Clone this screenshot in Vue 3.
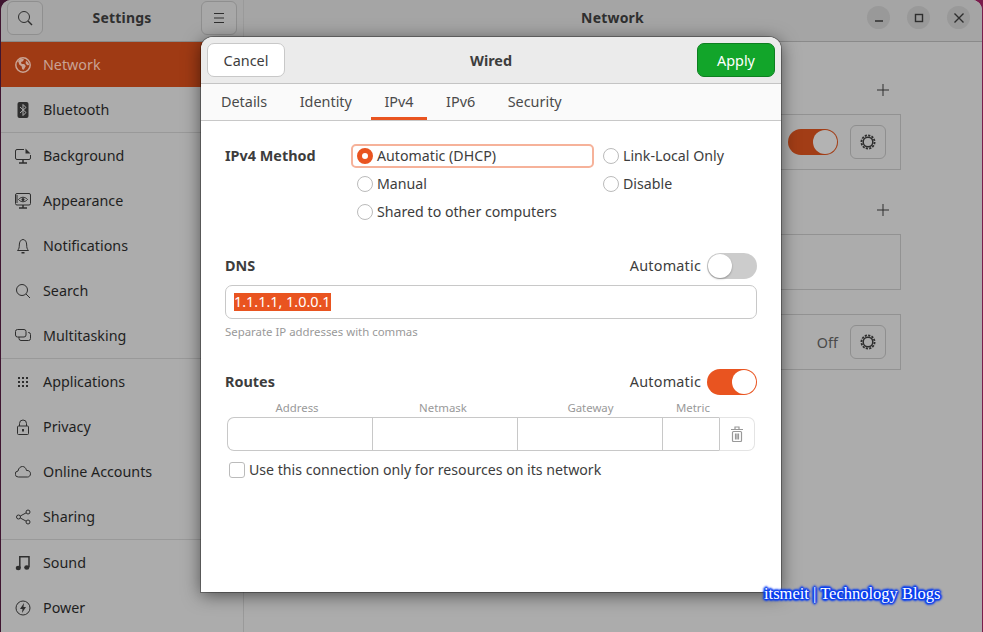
<script setup>
const groups = [
  [
    { name: 'Network', icon: 'globe', active: true },
    { name: 'Bluetooth', icon: 'bluetooth' },
  ],
  [
    { name: 'Background', icon: 'background' },
    { name: 'Appearance', icon: 'appearance' },
    { name: 'Notifications', icon: 'bell' },
    { name: 'Search', icon: 'search' },
    { name: 'Multitasking', icon: 'multitask' },
  ],
  [
    { name: 'Applications', icon: 'apps' },
    { name: 'Privacy', icon: 'lock' },
    { name: 'Online Accounts', icon: 'cloud' },
    { name: 'Sharing', icon: 'share' },
  ],
  [
    { name: 'Sound', icon: 'music' },
    { name: 'Power', icon: 'power' },
  ],
]

const tabs = ['Details', 'Identity', 'IPv4', 'IPv6', 'Security']
const routeCols = ['Address', 'Netmask', 'Gateway', 'Metric']
const appDots = [[3, 3], [7, 3], [11, 3], [3, 7], [7, 7], [11, 7], [3, 11], [7, 11], [11, 11]]
</script>

<template>
  <div class="desktop">
    <div class="window">
      <aside class="sidebar">
        <div class="side-head">
          <button class="head-btn">
            <svg viewBox="0 0 16 16" width="16" height="16"><circle cx="7" cy="7" r="5.5" class="st"/><path d="M11 11l4 4" class="st2"/></svg>
          </button>
          <span class="head-title">Settings</span>
          <button class="head-btn">
            <svg viewBox="0 0 16 16" width="16" height="16"><path d="M3 3.5h10M3 8h10M3 12.500h10" class="st"/></svg>
          </button>
        </div>
        <nav>
          <div v-for="(group, i) in groups" :key="i" class="nav-group">
            <div v-for="item in group" :key="item.name" class="nav-row" :class="{ active: item.active }">
              <svg viewBox="0 0 16 16" width="16" height="16" class="nav-icon">
                <template v-if="item.icon === 'globe'">
                  <circle cx="8" cy="8" r="7.2" class="st"/>
                  <path d="M3 4l3-2.500 3 .8-1 2-2 .6.6 2 2.600.2 1.600 2-2 3.600-1.600-.4-.6-3-2.200-1.600zM11 3.500l2.400 2.200.8 2.400-2 .2-1.600-2z" class="fl"/>
                </template>
                <template v-else-if="item.icon === 'bluetooth'">
                  <rect x="2.500" y="0" width="11" height="16" rx="2" class="fl"/>
                  <path d="M5 5l6 5.500-3 3V2.500l3 3L5 11" class="cut-st"/>
                </template>
                <template v-else-if="item.icon === 'background'">
                  <path d="M9 1.500H2A1.500 1.500 0 0 0 .5 3v7A1.500 1.500 0 0 0 2 11.500h12a1.500 1.500 0 0 0 1.500-1.500V7" class="st"/>
                  <path d="M10.500 .5l5 5h-5z" class="fl"/>
                  <path d="M8 12v2.500M4 15h8" class="st2"/>
                </template>
                <template v-else-if="item.icon === 'appearance'">
                  <rect x=".5" y=".5" width="15" height="11.500" rx="1.500" class="st"/>
                  <path d="M3.500 6.500c2.500-3 6.500-3 9 0-2.500 3-6.500 3-9 0z" class="st"/>
                  <circle cx="8" cy="6.500" r="1.500" class="fl"/>
                  <path d="M2 2.500v8" class="dash"/>
                  <path d="M8 12v2.500M4 15h8" class="st2"/>
                </template>
                <template v-else-if="item.icon === 'bell'">
                  <path d="M2.500 12.500h11c-1.500-1.500-1.800-3-1.800-5.500C11.700 4 10.300 1.500 8 1.500S4.300 4 4.300 7c0 2.500-.3 4-1.800 5.500z" class="st"/>
                  <path d="M6.500 14.800h3" class="st2"/>
                </template>
                <template v-else-if="item.icon === 'search'">
                  <circle cx="7" cy="7" r="5.500" class="st"/><path d="M11 11l4 4" class="st"/>
                </template>
                <template v-else-if="item.icon === 'multitask'">
                  <rect x=".5" y="1.500" width="10.500" height="7.500" rx="2" class="st"/>
                  <path d="M13 4.500h.5a2 2 0 0 1 2 2v4a2 2 0 0 1-2 2H6a2 2 0 0 1-2-2V9" class="st"/>
                </template>
                <template v-else-if="item.icon === 'apps'">
                  <rect v-for="p in appDots" :key="p.join()" :x="p[0]" :y="p[1]" width="2" height="2" class="fl"/>
                </template>
                <template v-else-if="item.icon === 'lock'">
                  <rect x="2.500" y="7" width="11" height="8.500" rx="1" class="st"/>
                  <path d="M4.500 7V4.500a3.500 3.500 0 0 1 7 0V7" class="st"/>
                  <rect x="7" y="10" width="2" height="2.500" class="fl"/>
                </template>
                <template v-else-if="item.icon === 'cloud'">
                  <path d="M3.500 13a3 3 0 0 1-.5-6c.5-3 2.500-4.500 4.500-4.500S11 4 11.500 6.500c2.500-.3 4 1.300 4 3.300S14 13 12.500 13z" class="st"/>
                </template>
                <template v-else-if="item.icon === 'share'">
                  <circle cx="13" cy="3" r="2" class="st"/><circle cx="13" cy="13" r="2" class="st"/><circle cx="3.500" cy="8" r="2" class="st"/>
                  <path d="M5.300 7l5.900-3.200M5.300 9l5.900 3.200" class="st"/>
                </template>
                <template v-else-if="item.icon === 'music'">
                  <path d="M4.800 13V1.800h9.200V12" class="st2"/>
                  <ellipse cx="3.300" cy="13" rx="2.600" ry="2.200" class="fl"/>
                  <ellipse cx="11.800" cy="12.500" rx="2.600" ry="2.200" class="fl"/>
                </template>
                <template v-else>
                  <circle cx="8" cy="8" r="7" class="st"/>
                  <path d="M9 3L5 9h2.500L7 13l4-6H8.500z" class="fl"/>
                </template>
              </svg>
              <span>{{ item.name }}</span>
            </div>
          </div>
        </nav>
      </aside>

      <main class="main">
        <div class="main-head">
          <span class="head-title">Network</span>
          <div class="win-btns">
            <span class="win-btn"><svg viewBox="0 0 16 16" width="16" height="16"><path d="M4 11h8" class="win-ic"/></svg></span>
            <span class="win-btn"><svg viewBox="0 0 16 16" width="16" height="16"><rect x="4.500" y="4.500" width="7" height="7" class="win-ic"/></svg></span>
            <span class="win-btn"><svg viewBox="0 0 16 16" width="16" height="16"><path d="M3.500 3.500l9 9M12.500 3.500l-9 9" class="win-ic"/></svg></span>
          </div>
        </div>
        <div class="main-body">
          <div class="sec-plus">
            <svg viewBox="0 0 12 12" width="12" height="12"><path d="M6 0v12M0 6h12" class="st"/></svg>
          </div>
          <div class="card">
            <span class="bg-toggle"><i></i></span>
            <button class="gear-btn">
              <svg viewBox="0 0 16 16" width="16" height="16"><circle cx="8" cy="8" r="6.600" class="gear-teeth"/><circle cx="8" cy="8" r="4.800" class="st2"/></svg>
            </button>
          </div>
          <div class="sec-plus second">
            <svg viewBox="0 0 12 12" width="12" height="12"><path d="M6 0v12M0 6h12" class="st"/></svg>
          </div>
          <div class="card"></div>
          <div class="card third">
            <span class="off">Off</span>
            <button class="gear-btn">
              <svg viewBox="0 0 16 16" width="16" height="16"><circle cx="8" cy="8" r="6.600" class="gear-teeth"/><circle cx="8" cy="8" r="4.800" class="st2"/></svg>
            </button>
          </div>
        </div>
      </main>
    </div>

    <div class="dialog">
      <header class="dlg-head">
        <button class="btn">Cancel</button>
        <span class="dlg-title">Wired</span>
        <button class="btn apply">Apply</button>
      </header>
      <div class="tabs">
        <span v-for="t in tabs" :key="t" class="tab" :class="{ on: t === 'IPv4' }">{{ t }}</span>
      </div>
      <div class="dlg-body">
        <div class="method">
          <span class="bold method-label">IPv4 Method</span>
          <div class="radio-grid">
            <div class="radio focus"><i class="dot checked"></i>Automatic (DHCP)</div>
            <div class="radio"><i class="dot"></i>Link-Local Only</div>
            <div class="radio"><i class="dot"></i>Manual</div>
            <div class="radio"><i class="dot"></i>Disable</div>
            <div class="radio"><i class="dot"></i>Shared to other computers</div>
          </div>
        </div>

        <div class="sec-row">
          <span class="bold">DNS</span>
          <div class="auto">Automatic<span class="switch"><i></i></span></div>
        </div>
        <div class="entry"><span class="selected">1.1.1.1, 1.0.0.1</span></div>
        <div class="hint">Separate IP addresses with commas</div>

        <div class="sec-row routes">
          <span class="bold">Routes</span>
          <div class="auto">Automatic<span class="switch on"><i></i></span></div>
        </div>
        <div class="route-labels">
          <span v-for="c in routeCols" :key="c">{{ c }}</span>
        </div>
        <div class="route-row">
          <div v-for="c in routeCols" :key="c" class="route-cell"></div>
          <div class="route-del">
            <svg viewBox="0 0 16 16" width="16" height="16"><path d="M2 3.500h12M6 3V1h4v2" class="trash"/><rect x="3.500" y="5.500" width="9" height="10" rx="1" class="trash"/><path d="M6.500 7.500v6M8 7.500v6M9.500 7.500v6" class="trash"/></svg>
          </div>
        </div>
        <label class="check"><i class="box"></i>Use this connection only for resources on its network</label>
      </div>
    </div>

    <div class="watermark">itsmeit | Technology Blogs</div>
  </div>
</template>

<style>
body { margin: 0; }
</style>

<style scoped>
.desktop {
  position: relative;
  width: 983px;
  height: 632px;
  overflow: hidden;
  background: linear-gradient(90deg, #3f1530, #7b1c4c);
  font-family: "Noto Sans", "Open Sans", sans-serif;
  font-size: 14.4px;
  color: #3d3d3d;
}
.window {
  display: flex;
  height: 632px;
  margin: 0 1px;
  background: #acacac;
  border-radius: 10px 10px 0 0;
  overflow: hidden;
}
.sidebar {
  width: 242px;
  flex: none;
  border-right: 1px solid #9a9a9a;
}
.side-head {
  box-sizing: border-box;
  height: 42px;
  display: flex;
  justify-content: space-between;
  padding: 1px 6px 0;
  background: #a5a5a5;
  border-bottom: 1px solid #8a8a8a;
}
.head-btn {
  width: 36px;
  height: 34px;
  padding: 0;
  display: flex;
  align-items: center;
  justify-content: center;
  background: #a8a8a8;
  border: 1px solid #8f8f8f;
  border-radius: 6px;
}
.head-title {
  font-weight: 700;
  font-size: 14px;
  line-height: 34px;
  letter-spacing: .2px;
  color: #2f2f2f;
}
.st { fill: none; stroke: #2e2e2e; stroke-width: 1; }
.st2 { fill: none; stroke: #2e2e2e; stroke-width: 1.5; }
.fl { fill: #2e2e2e; }
.dash { fill: none; stroke: #2e2e2e; stroke-width: 2; stroke-dasharray: 1 1; }
.cut-st { fill: none; stroke: #acacac; stroke-width: 1; }
.nav-group { border-bottom: 1px solid #999; }
.nav-group:last-child { border-bottom: 0; }
.nav-row {
  height: 45px;
  display: flex;
  align-items: center;
  gap: 12px;
  padding-left: 14px;
  font-size: 14.3px;
  color: #1f1f1f;
}
.nav-row.active { background: #9f3a14; color: #c9a394; }
.nav-row.active .fl { fill: #c9a394; }
.nav-row.active .st { stroke: #c9a394; stroke-width: 1.5; }
.nav-icon { flex: none; }

.main { flex: 1; background: #acacac; }
.main-head {
  position: relative;
  box-sizing: border-box;
  height: 42px;
  padding: 1px 1px 0 0;
  background: #a5a5a5;
  border-bottom: 1px solid #8a8a8a;
  text-align: center;
}
.win-btns {
  position: absolute;
  right: 12px;
  top: 6px;
  display: flex;
  gap: 17px;
}
.win-btn {
  width: 23px;
  height: 23px;
  border-radius: 50%;
  background: #999;
  display: flex;
  align-items: center;
  justify-content: center;
}
.win-ic { fill: none; stroke: #2e2e2e; stroke-width: 1.4; }
.main-body {
  padding: 36px 81px 0 80px;
}
.sec-plus {
  height: 24px;
  margin-bottom: 12px;
  display: flex;
  align-items: center;
  justify-content: flex-end;
  padding-right: 12px;
}
.sec-plus.second { margin-top: 28px; }
.card {
  box-sizing: border-box;
  height: 56px;
  border: 1px solid #929292;
  display: flex;
  align-items: center;
  justify-content: flex-end;
  gap: 12px;
  padding-right: 14px;
}
.card.third { margin-top: 24px; }
.bg-toggle {
  box-sizing: border-box;
  width: 50px;
  height: 26px;
  padding: 1px;
  border-radius: 13px;
  background: #a23d16;
  display: flex;
  justify-content: flex-end;
}
.bg-toggle i {
  width: 24px;
  height: 24px;
  border-radius: 50%;
  background: #b3b3b3;
}
.gear-btn {
  width: 36px;
  height: 34px;
  padding: 0;
  display: flex;
  align-items: center;
  justify-content: center;
  background: transparent;
  border: 1px solid #8f8f8f;
  border-radius: 6px;
}
.gear-teeth { fill: none; stroke: #2e2e2e; stroke-width: 1.8; stroke-dasharray: 2.2 1.25; }
.off { color: #4a4a4a; }

.dialog {
  position: absolute;
  left: 201px;
  top: 37px;
  width: 580px;
  height: 555px;
  display: flex;
  flex-direction: column;
  background: #fff;
  border-radius: 12px 12px 0 0;
  box-shadow: 0 0 0 1px rgba(0, 0, 0, .3), 0 3px 18px rgba(0, 0, 0, .55);
}
.dlg-head {
  box-sizing: border-box;
  height: 47px;
  flex: none;
  display: flex;
  align-items: center;
  justify-content: space-between;
  padding: 0 6px;
  background: #ebebeb;
  border-bottom: 1px solid #c4c4c4;
  border-radius: 12px 12px 0 0;
}
.btn {
  width: 78px;
  height: 34px;
  padding: 0;
  font: inherit;
  color: #3d3d3d;
  background: #fff;
  border: 1px solid #c8c8c8;
  border-radius: 7px;
}
.btn.apply {
  color: #fff;
  background: #12a52a;
  border-color: #0d7f20;
}
.dlg-title { font-weight: 700; }
.tabs {
  box-sizing: border-box;
  height: 37px;
  flex: none;
  display: flex;
  gap: 6.5px;
  padding-left: 7px;
  background: #fafafa;
  border-bottom: 1px solid #c8c8c8;
}
.tab {
  height: 36px;
  padding: 0 13px;
  line-height: 35px;
  color: #4a4a4a;
}
.tab.on {
  box-sizing: border-box;
  border-bottom: 3px solid #e95420;
}
.dlg-body { padding: 23px 24px 0; }
.bold { font-weight: 700; }
.sec-row .bold { margin-top: -2px; }
.method { display: flex; }
.method-label {
  width: 126px;
  flex: none;
  line-height: 24px;
}
.radio-grid {
  display: grid;
  grid-template-columns: 243px auto;
  column-gap: 3px;
  row-gap: 4px;
}
.radio {
  box-sizing: border-box;
  height: 24px;
  display: flex;
  align-items: center;
  gap: 4px;
  padding: 0 4px 2px;
  border: 2px solid transparent;
  border-radius: 5px;
  font-size: 14.2px;
  white-space: nowrap;
}
.radio.focus { border-color: #f6b29a; }
.dot {
  box-sizing: border-box;
  width: 16px;
  height: 16px;
  flex: none;
  margin-bottom: -2px;
  border-radius: 50%;
  border: 1px solid #bbb;
}
.dot.checked {
  border: 5px solid #e95420;
  background: #fff;
}
.sec-row {
  height: 26px;
  margin-top: 29px;
  display: flex;
  align-items: center;
  justify-content: space-between;
}
.auto {
  display: flex;
  align-items: center;
  gap: 6px;
  padding-bottom: 2px;
  letter-spacing: .2px;
}
.switch {
  box-sizing: border-box;
  width: 50px;
  height: 26px;
  margin-bottom: -2px;
  padding: 1px;
  border-radius: 13px;
  background: #ccc;
  display: flex;
}
.switch i {
  width: 24px;
  height: 24px;
  border-radius: 50%;
  background: #fff;
  box-shadow: 0 1px 2px rgba(0, 0, 0, .3);
}
.switch.on {
  background: #e95420;
  justify-content: flex-end;
}
.switch.on i { box-shadow: none; }
.entry {
  box-sizing: border-box;
  height: 34px;
  margin-top: 6px;
  padding-left: 8px;
  display: flex;
  align-items: center;
  border: 1px solid #c8c8c8;
  border-radius: 7px;
}
.selected {
  height: 18px;
  line-height: 18px;
  color: #fff;
  background: #e95420;
}
.hint {
  height: 16px;
  margin-top: 5px;
  line-height: 16px;
  font-size: 11.4px;
  color: #999;
}
.route-labels {
  display: grid;
  grid-template-columns: 144px 148px 147px 58px;
  height: 16px;
  padding: 5px 0 1px;
  line-height: 16px;
  font-size: 11.4px;
  text-align: center;
  color: #999;
}
.route-row {
  display: grid;
  grid-template-columns: 145px 145px 145px 57px 36px;
  height: 34px;
  margin: 0 2px;
}
.route-cell {
  border: 1px solid #c8c8c8;
  border-right: 0;
}
.route-cell:first-child { border-radius: 7px 0 0 7px; }
.route-del {
  display: flex;
  align-items: center;
  justify-content: center;
  border: 1px solid #e4e4e4;
  border-left-color: #c8c8c8;
  border-radius: 0 7px 7px 0;
}
.trash { fill: none; stroke: #999; stroke-width: 1.2; }
.check {
  box-sizing: border-box;
  display: flex;
  align-items: center;
  gap: 4px;
  height: 16px;
  margin: 11px 0 0 4px;
  padding-bottom: 2px;
  font-size: 14.15px;
}
.box {
  box-sizing: border-box;
  width: 16px;
  height: 16px;
  flex: none;
  margin-bottom: -2px;
  border: 1px solid #bbb;
  border-radius: 3px;
}
.watermark {
  position: absolute;
  left: 764px;
  top: 584px;
  font-family: "Liberation Serif", serif;
  font-size: 16.5px;
  line-height: 20px;
  color: #fff;
  white-space: nowrap;
  text-shadow: 1px 0 1px #0a3ff0, -1px 0 1px #0a3ff0, 0 1px 1px #0a3ff0, 0 -1px 1px #0a3ff0, 1px 1px 2px #0a3ff0, -1px -1px 2px #0a3ff0, 1px -1px 2px #0a3ff0, -1px 1px 2px #0a3ff0, 2px 0 2px #0a3ff0, -2px 0 2px #0a3ff0, 0 2px 2px #0a3ff0, 0 -2px 2px #0a3ff0;
}
</style>
